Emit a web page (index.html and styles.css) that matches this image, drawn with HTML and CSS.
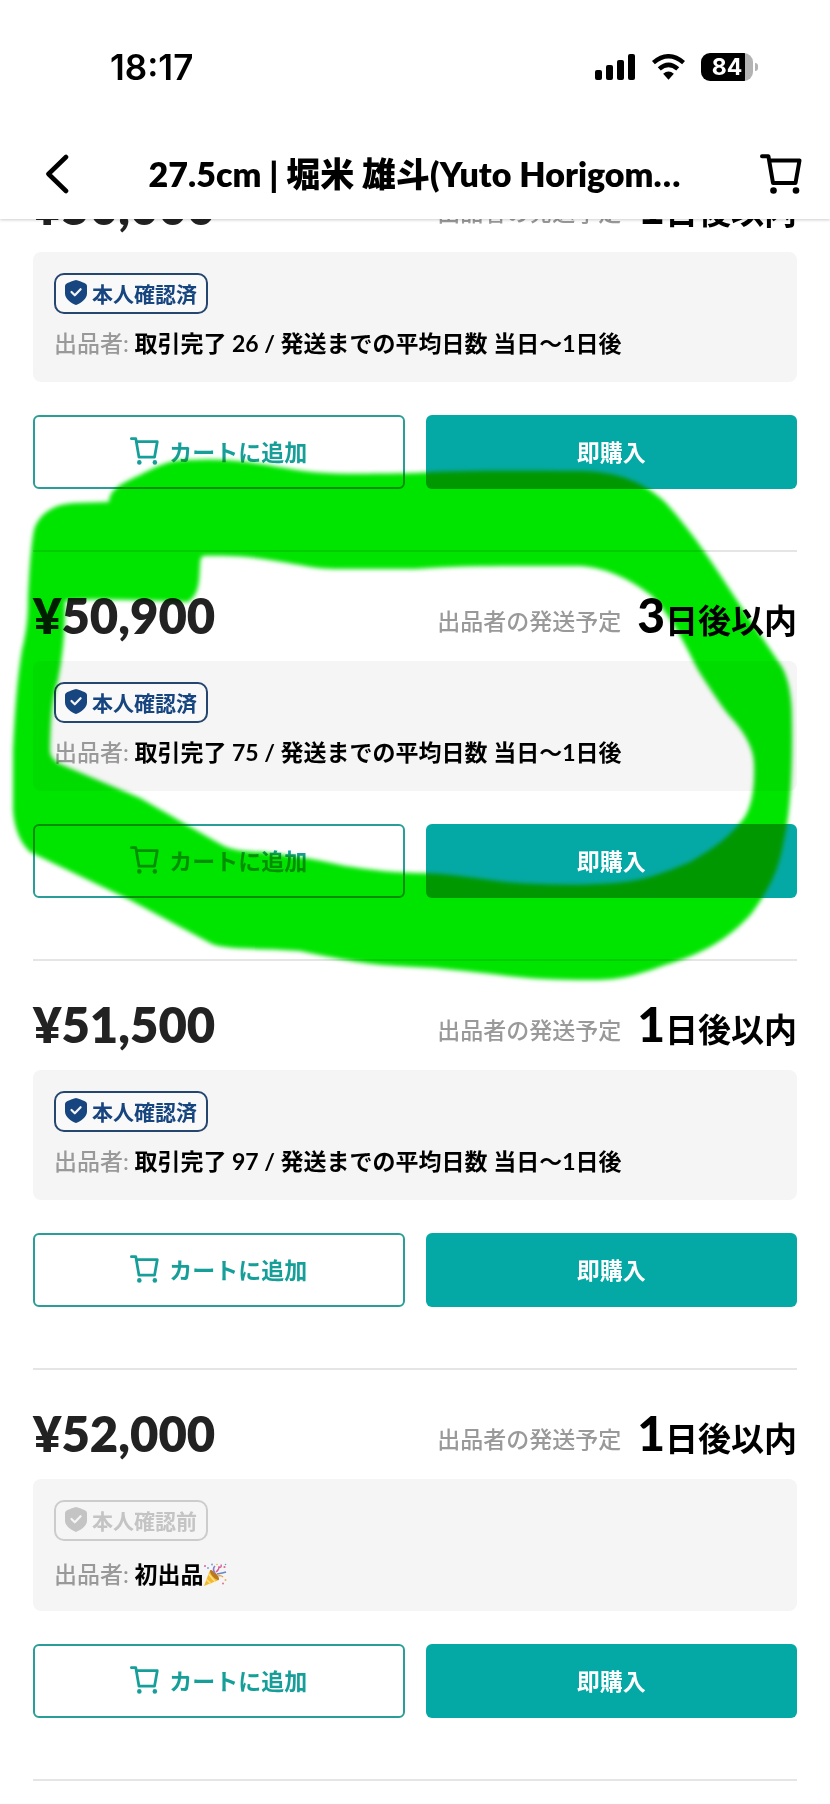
FILE: index.html
```html
<!DOCTYPE html>
<html lang="ja">
<head>
<meta charset="utf-8">
<meta name="viewport" content="width=device-width, initial-scale=1">
<title>27.5cm | 堀米 雄斗(Yuto Horigom…</title>
<link rel="stylesheet" href="styles.css">
</head>
<body>
<svg class="defs" aria-hidden="true">
  <symbol id="cart" viewBox="0 0 42 40">
    <path d="M2 2.200H8.400L13 29H35.500L39.500 6.500H9.200" fill="none" stroke="currentColor" stroke-width="4" stroke-linecap="round" stroke-linejoin="round"/>
    <circle cx="13.500" cy="36.500" r="3.300" fill="currentColor"/>
    <circle cx="36" cy="36.500" r="3.300" fill="currentColor"/>
  </symbol>
  <symbol id="shield" viewBox="0 0 22 25">
    <path d="M11 0C12.200 0 19.500 3 20.600 3.700Q22 4.500 22 6V13.500C22 19 16 23 11 25C6 23 0 19 0 13.500V6Q0 4.500 1.400 3.700C2.500 3 9.800 0 11 0Z" fill="currentColor"/>
    <path d="M6.500 12L9.800 15.300L15.600 9.200" fill="none" stroke="#f5f5f5" stroke-width="2.200" stroke-linecap="round" stroke-linejoin="round"/>
  </symbol>
</svg>

<header class="top">
  <div class="status">
    <span class="time">18:17</span>
    <div class="signals">
      <svg class="bars" viewBox="0 0 41 26" aria-label="電波">
        <rect x="0" y="16" width="7" height="10" rx="2"/><rect x="11" y="11" width="7" height="15" rx="2"/><rect x="22" y="6" width="7" height="20" rx="2"/><rect x="33" y="0" width="7" height="26" rx="2"/>
      </svg>
      <svg class="wifi" viewBox="0 0 36 26" aria-label="Wi-Fi">
        <path d="M2.500 8.500Q18-4.500 33.500 8.500" fill="none" stroke="#000" stroke-width="4.600"/>
        <path d="M8.500 15Q18 6.500 27.500 15" fill="none" stroke="#000" stroke-width="4.600"/>
        <path d="M12.500 20Q18 15.500 23.500 20L18 26Z"/>
      </svg>
      <div class="power"><span class="battery">84</span><span class="tip"></span></div>
    </div>
  </div>
  <nav class="nav">
    <button class="icon-button" type="button" aria-label="戻る">
      <svg class="back" viewBox="0 0 24 40"><path d="M21 3L3.500 20L21 37" fill="none" stroke="#000" stroke-width="4.600" stroke-linecap="round" stroke-linejoin="round"/></svg>
    </button>
    <h1 class="title">27.5cm | 堀米 雄斗(Yuto Horigom…</h1>
    <button class="icon-button" type="button" aria-label="カート"><svg class="nav-cart"><use href="#cart"/></svg></button>
  </nav>
</header>

<main class="list">
  <article class="item">
    <div class="head"><span class="price">¥50,000</span><p class="ship"><span class="ship-label">出品者の発送予定</span><strong class="ship-days"><span class="num">1</span>日後以内</strong></p></div>
    <div class="seller">
      <span class="badge"><svg class="shield"><use href="#shield"/></svg>本人確認済</span>
      <p class="info"><span class="info-label">出品者:</span> 取引完了 26 / 発送までの平均日数 当日〜1日後</p>
    </div>
    <div class="actions"><button class="btn add" type="button"><svg class="cart"><use href="#cart"/></svg>カートに追加</button><button class="btn buy" type="button">即購入</button></div>
  </article>
  <article class="item">
    <div class="head"><span class="price">¥50,900</span><p class="ship"><span class="ship-label">出品者の発送予定</span><strong class="ship-days"><span class="num">3</span>日後以内</strong></p></div>
    <div class="seller">
      <span class="badge"><svg class="shield"><use href="#shield"/></svg>本人確認済</span>
      <p class="info"><span class="info-label">出品者:</span> 取引完了 75 / 発送までの平均日数 当日〜1日後</p>
    </div>
    <div class="actions"><button class="btn add" type="button"><svg class="cart"><use href="#cart"/></svg>カートに追加</button><button class="btn buy" type="button">即購入</button></div>
  </article>
  <article class="item">
    <div class="head"><span class="price">¥51,500</span><p class="ship"><span class="ship-label">出品者の発送予定</span><strong class="ship-days"><span class="num">1</span>日後以内</strong></p></div>
    <div class="seller">
      <span class="badge"><svg class="shield"><use href="#shield"/></svg>本人確認済</span>
      <p class="info"><span class="info-label">出品者:</span> 取引完了 97 / 発送までの平均日数 当日〜1日後</p>
    </div>
    <div class="actions"><button class="btn add" type="button"><svg class="cart"><use href="#cart"/></svg>カートに追加</button><button class="btn buy" type="button">即購入</button></div>
  </article>
  <article class="item">
    <div class="head"><span class="price">¥52,000</span><p class="ship"><span class="ship-label">出品者の発送予定</span><strong class="ship-days"><span class="num">1</span>日後以内</strong></p></div>
    <div class="seller first-time">
      <span class="badge pending"><svg class="shield"><use href="#shield"/></svg>本人確認前</span>
      <p class="info"><span class="info-label">出品者:</span> 初出品<svg class="popper" viewBox="0 0 24 24" role="img" aria-label="お祝い">
        <path d="M1 23L7 7Q13 9 16 17Z" fill="#f5b92e"/>
        <path d="M3.500 16.500L8 21M5.500 11L12.500 19" stroke="#fbe08a" stroke-width="1.500"/>
        <ellipse cx="11.500" cy="12" rx="2.200" ry="6.300" transform="rotate(-42 11.500 12)" fill="#b9771f"/>
        <path d="M12 10Q9 6 12 3" fill="none" stroke="#8b7bd0" stroke-width="1.600"/>
        <path d="M14 11Q20 10 23 9" fill="none" stroke="#6a86c8" stroke-width="1.700"/>
        <path d="M13 9Q16 7 16 4Q19 5 18 1.500" fill="none" stroke="#d65f96" stroke-width="1.400"/>
        <path d="M15 13Q18 12 20 14" fill="none" stroke="#e8a33d" stroke-width="1.400"/>
        <g fill="#d8688f"><circle cx="2" cy="3" r="1"/><circle cx="21.500" cy="4" r="1.100"/><circle cx="20" cy="20.500" r=".9"/></g>
        <g fill="#6f9bd8"><circle cx="5" cy="5" r=".9"/><circle cx="9" cy="1.500" r=".9"/><circle cx="22.500" cy="1.500" r=".8"/></g>
        <g fill="#e9b44c"><circle cx="14" cy="1.500" r=".8"/><circle cx="22.500" cy="17" r="1"/></g>
      </svg></p>
    </div>
    <div class="actions"><button class="btn add" type="button"><svg class="cart"><use href="#cart"/></svg>カートに追加</button><button class="btn buy" type="button">即購入</button></div>
  </article>

  <svg class="marker" viewBox="0 0 830 1804" aria-hidden="true">
    <path fill="#00e500" fill-rule="evenodd" d="M109 502C110 490 118 485 140 475C163 463 172 460 190 460C225 458 250 462 285 468C320 475 345 474 415 473C470 470 520 471 580 471C620 472 643 482 665 502C695 535 715 567 740 605L782 667Q792 685 792 720C793 770 790 815 784 840C779 868 772 885 752 913C728 940 702 954 665 965C630 978 615 980 590 980C555 980 530 979 500 975C465 971 440 968 415 967C365 965 345 960 300 951C265 948 225 950 212 944L130 900L30 852Q15 838 13 810L13 750C15 710 17 680 22 650C27 630 28 615 28 600C29 575 31 545 34 530C39 514 53 504 75 503ZM203 556C250 555 270 560 300 565C318 569 330 569 345 569H415C465 565 520 566 580 566C610 568 632 581 652 596C675 622 685 645 698 670C712 692 725 712 735 722Q754 745 754 765C755 793 750 809 744 818C732 835 712 850 690 862C660 875 640 881 615 883C580 886 540 885 505 882C475 878 445 873 415 873C385 872 365 869 345 866C310 858 285 855 262 852Q235 852 222 845C195 830 165 812 140 798L60 764Q50 759 50 750C51 715 52 700 58 680C64 650 65 625 65 601C95 598 130 600 160 601Q185 602 188 602C200 594 199 580 200 566Q200 557 203 556Z"/>
  </svg>
</main>
</body>
</html>
```

FILE: styles.css
```css
* { box-sizing: border-box; }

body {
  margin: 0;
  background: #fff;
  color: #000;
  font-family: Lato, "Noto Sans CJK JP", sans-serif;
}

h1, p { margin: 0; }

button {
  font: inherit;
  color: inherit;
  background: none;
  border: 0;
  padding: 0;
}

svg { display: block; }

.defs { position: absolute; width: 0; height: 0; }

/* Header */
.top {
  position: fixed;
  top: 0;
  left: 0;
  right: 0;
  z-index: 2;
  background: #fff;
  box-shadow: 0 1px 3px rgba(0, 0, 0, 0.2);
}

.status {
  display: flex;
  justify-content: space-between;
  align-items: center;
  height: 134px;
  padding: 0 72px 0 110px;
}

.time { font: 600 35px/40px Inter, sans-serif; }

.signals { display: flex; align-items: center; gap: 15px; }
.bars { width: 41px; height: 26px; }
.wifi { width: 35px; height: 26px; }
.power { display: flex; align-items: center; gap: 2px; }

.battery {
  width: 52px;
  height: 28px;
  border-radius: 9px;
  background: linear-gradient(to right, #000 84%, #b3b3b3 84%);
  color: #fff;
  font: 700 23px/28px Inter, sans-serif;
  text-align: center;
}

.tip { width: 3px; height: 8px; border-radius: 0 4px 4px 0; background: #b3b3b3; }

.nav {
  display: flex;
  align-items: center;
  justify-content: space-between;
  height: 85px;
  padding: 0 28px 6px 45px;
}

.icon-button { display: flex; }
.back { width: 24px; height: 40px; }
.nav-cart { width: 42px; height: 40px; }

.title {
  font-size: 34px;
  line-height: 48px;
  font-weight: 800;
  white-space: nowrap;
}

/* Listings */
.list {
  position: relative;
  padding: 143px 33px 24px;
  background: #fff;
}

.item {
  padding: 39px 0 61px;
  border-bottom: 2px solid #e5e5e5;
}

.head {
  display: flex;
  justify-content: space-between;
  align-items: flex-start;
  height: 48px;
  margin-bottom: 22px;
  line-height: 48px;
}

.price { color: #222; font-size: 49px; font-weight: 800; }
.ship { display: flex; align-items: flex-start; gap: 16px; white-space: nowrap; }
.ship-label { padding-top: 6px; color: #999; font-size: 23px; font-weight: 500; }
.ship-days { font-size: 33px; font-weight: 700; }
.num { font-size: 48px; font-weight: 900; }

.seller {
  display: flex;
  flex-direction: column;
  align-items: flex-start;
  gap: 12px;
  padding: 21px 21px 22px;
  border-radius: 8px;
  background: #f5f5f5;
}

.first-time { gap: 16px; padding-bottom: 20px; }

.badge {
  display: flex;
  align-items: center;
  gap: 5px;
  height: 41px;
  padding: 0 9px 2px;
  border: 2px solid #24466f;
  border-radius: 10px;
  background: #f9f9f9;
  color: #17457f;
  font-size: 21px;
  font-weight: 700;
}

.pending { border-color: #ccc; background: none; color: #c4c4c4; }
.shield { width: 22px; height: 25px; }

.info { font-size: 23px; line-height: 34px; font-weight: 700; }
.info-label { color: #999; font-weight: 500; }
.popper { display: inline-block; width: 24px; height: 24px; vertical-align: -4px; }

.actions {
  display: grid;
  grid-template-columns: 1fr 1fr;
  gap: 21px;
  margin-top: 33px;
}

.btn {
  display: flex;
  align-items: center;
  justify-content: center;
  gap: 10px;
  height: 74px;
  padding-bottom: 2px;
  border-radius: 6px;
  font-size: 23px;
  font-weight: 700;
}

.add { border: 2px solid #2a9d98; color: #169f99; }
.buy { background: #04a9a5; color: #fff; }
.cart { width: 29px; height: 28px; }

/* Highlighter stroke drawn over the list */
.marker {
  position: absolute;
  top: 0;
  left: 0;
  width: 100%;
  mix-blend-mode: multiply;
  filter: blur(2px);
  pointer-events: none;
}
```
